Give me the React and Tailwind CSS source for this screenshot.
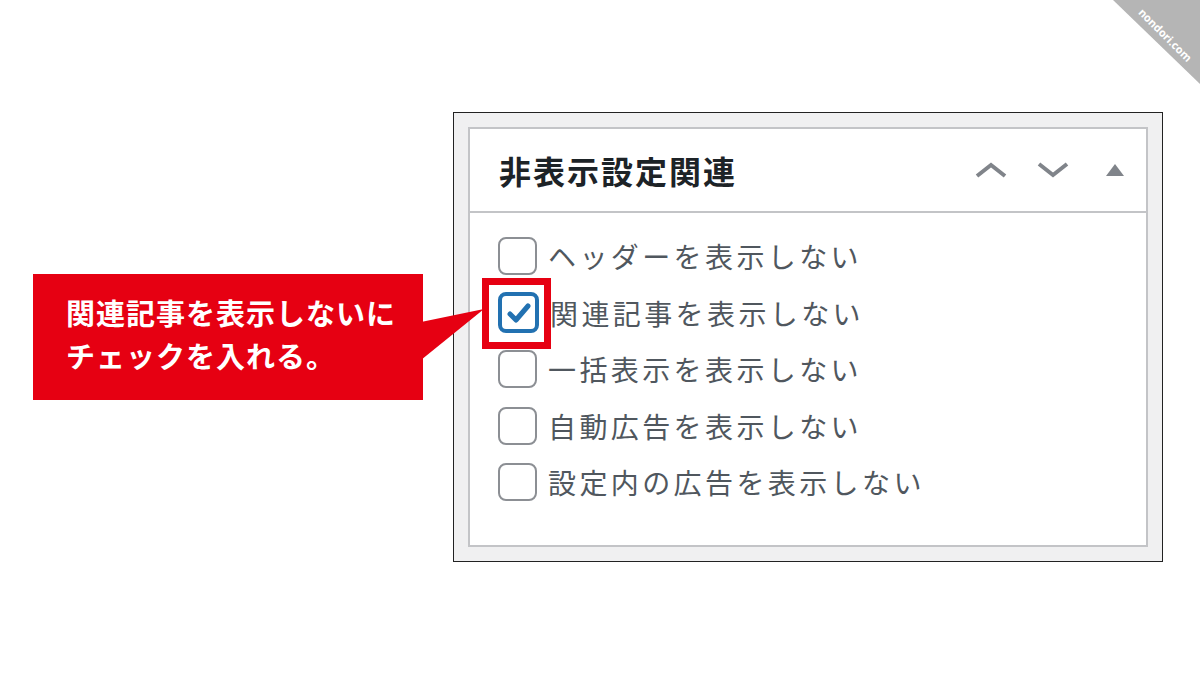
import React from 'react';

const items = [
    { label: 'ヘッダーを表示しない', checked: false },
    { label: '関連記事を表示しない', checked: true },
    { label: '一括表示を表示しない', checked: false },
    { label: '自動広告を表示しない', checked: false },
    { label: '設定内の広告を表示しない', checked: false },
];

const jp = { fontFamily: '"Noto Sans CJK JP", "Noto Sans", sans-serif' };

function Checkbox({ checked }) {
    if (checked) {
        return (
            <div className="w-[41px] h-[41px] rounded-[8px] border-4 border-[#2271b1] bg-white flex items-center justify-center shrink-0">
                <svg width="28" height="28" viewBox="0 0 28 28">
                    <path d="M5 15l6 6L23 7" fill="none" stroke="#2271b1" strokeWidth="5" strokeLinecap="round" strokeLinejoin="round" />
                </svg>
            </div>
        );
    }
    return <div className="w-[39px] h-[38px] rounded-[8px] border-2 border-[#8c8f94] bg-white shrink-0" />;
}

export default function App() {
    return (
        <div className="relative w-[1200px] h-[675px] bg-white overflow-hidden" style={jp}>
            {/* watermark */}
            <div className="absolute top-0 right-0 w-[87px] h-[84px] bg-[#b5b5b5] [clip-path:polygon(0_0,100%_0,100%_100%)]" />
            <div className="absolute top-[27px] left-[1130px] w-[70px] text-center whitespace-nowrap text-white text-[11px] font-bold rotate-45" style={{ fontFamily: '"Open Sans", sans-serif' }}>
                nondori.com
            </div>

            {/* panel */}
            <div className="ml-[453px] mt-[112px] w-[710px] h-[450px] border border-[#222] bg-[#f0f0f1] p-[14px]">
                <div className="h-full border-2 border-[#c3c4c7] bg-white flex flex-col">
                    <div className="h-[84px] border-b-2 border-[#c3c4c7] flex items-center justify-between pl-[29px] pr-[20px]">
                        <h2 className="text-[32px] font-semibold text-[#1d2327] tracking-[2px]">非表示設定関連</h2>
                        <div className="flex items-center gap-[28px] text-[#80848a]">
                            <svg width="34" height="20" viewBox="0 0 34 20">
                                <path d="M3 16L17 5l14 11" fill="none" stroke="currentColor" strokeWidth="4" />
                            </svg>
                            <svg width="34" height="20" viewBox="0 0 34 20">
                                <path d="M3 4l14 11 14-11" fill="none" stroke="currentColor" strokeWidth="4" />
                            </svg>
                            <svg width="22" height="16" viewBox="0 0 22 16" className="ml-[6px]">
                                <path d="M11 2l9 12H2z" fill="currentColor" />
                            </svg>
                        </div>
                    </div>
                    <div className="pt-[15px] pl-[28px]">
                        {items.map((item) => (
                            <div key={item.label} className="h-[56.5px] flex items-center gap-[11px]">
                                <Checkbox checked={item.checked} />
                                <span className="text-[28px] text-[#50575e] tracking-[3.4px] leading-none">{item.label}</span>
                            </div>
                        ))}
                    </div>
                </div>
            </div>

            {/* callout */}
            <div className="absolute left-[33px] top-[274px] w-[390px] h-[126px] bg-[#e60012] pl-[33px] pt-[17px]">
                <p className="text-white font-bold text-[29px] leading-[43px] tracking-[1px]">
                    関連記事を表示しないに
                    <br />
                    チェックを入れる。
                </p>
            </div>
            <svg className="absolute left-0 top-0" width="1200" height="675" viewBox="0 0 1200 675">
                <polygon points="421,322 484,309 421,360" fill="#e60012" />
            </svg>
            <div className="absolute left-[482px] top-[278px] w-[69px] h-[71px] border-[7px] border-[#e60012]" />
        </div>
    );
}
